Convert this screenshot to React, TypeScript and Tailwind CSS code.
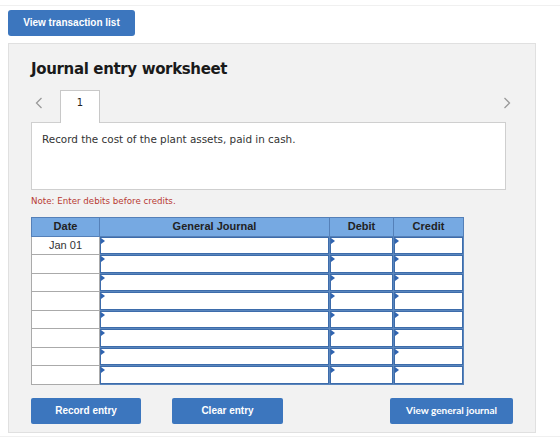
import React from "react";

const rows = ["Jan 01", "", "", "", "", "", "", ""];

function Tri() {
  return (
    <span className="absolute left-0 top-0 w-0 h-0 border-t-[3px] border-b-[3px] border-l-[4px] border-t-transparent border-b-transparent border-l-[#2f63b0]" />
  );
}

function InputCell() {
  return (
    <td className="p-0 h-[18.5px] border border-[#5a86bd]">
      <div className="relative h-full border border-[#3d6cab] bg-white">
        <Tri />
      </div>
    </td>
  );
}

function Chevron({ dir }: { dir: "left" | "right" }) {
  return (
    <svg width="8" height="12" viewBox="0 0 8 12" fill="none" stroke="#9a9a9a" strokeWidth="1.3">
      {dir === "left" ? <path d="M6.5 1 L1.5 6 L6.5 11" /> : <path d="M1.5 1 L6.5 6 L1.5 11" />}
    </svg>
  );
}

export default function App() {
  return (
    <div className="w-[560px] h-[442px] bg-white relative font-['DejaVu_Sans',sans-serif]">
      <div className="h-[6px] border-b border-[#f0f0f0]" />
      <div className="px-2 pt-[3px]">
        <button className="h-[26px] w-[127px] rounded-[3px] bg-[#3c76be] text-white text-[10px] font-bold font-['Liberation_Sans',sans-serif]">
          View transaction list
        </button>
      </div>
      <div className="mx-2 mt-[7px] w-[528px] h-[390px] bg-[#f2f2f2] border border-[#e0e0e0] px-[22px] pt-[15px]">
        <h1 className="text-[15px] font-bold text-[#1a1a1a] leading-[20px] tracking-[-0.35px]">
          Journal entry worksheet
        </h1>
        <div className="mt-[10px] flex items-end h-[33px] relative">
          <span className="w-[29px] pl-[4px] pb-[13px]">
            <Chevron dir="left" />
          </span>
          <div className="w-[40px] h-[33px] bg-white border border-[#c8c8c8] border-b-0 flex justify-center pt-[4px] text-[10px] text-[#222] relative z-10 -mb-px">
            1
          </div>
          <span className="ml-auto mr-[2px] pb-[13px]">
            <Chevron dir="right" />
          </span>
        </div>
        <div className="w-[475px] h-[68px] bg-white border border-[#cfcfcf] px-[10px] pt-[9px] text-[10.4px] text-[#333]">
          Record the cost of the plant assets, paid in cash.
        </div>
        <p className="mt-[5px] text-[8.7px] text-[#b83a32]">Note: Enter debits before credits.</p>
        <table className="mt-[9px] border-collapse w-[432px] font-['Liberation_Sans',sans-serif] table-fixed">
          <colgroup>
            <col className="w-[68px]" />
            <col className="w-[230px]" />
            <col className="w-[64px]" />
            <col className="w-[70px]" />
          </colgroup>
          <thead>
            <tr className="h-[19px] bg-[#76a9e2] text-[11px] font-bold text-[#222]">
              <th className="border border-[#5580b8] font-bold">Date</th>
              <th className="border border-[#5580b8] font-bold">General Journal</th>
              <th className="border border-[#5580b8] font-bold">Debit</th>
              <th className="border border-[#5580b8] font-bold">Credit</th>
            </tr>
          </thead>
          <tbody>
            {rows.map((d, i) => (
              <tr key={i} className="h-[18.5px]">
                <td className="p-0 border border-[#aaaaaa] bg-white text-center text-[11px] text-[#333]">{d}</td>
                <InputCell />
                <InputCell />
                <InputCell />
              </tr>
            ))}
          </tbody>
        </table>
        <div className="mt-[13px] flex w-[482px] text-white text-[10px] font-bold font-['Liberation_Sans',sans-serif]">
          <button className="w-[110px] h-[26px] rounded-[2px] bg-[#3c76be]">Record entry</button>
          <button className="ml-[31px] w-[111px] h-[26px] rounded-[2px] bg-[#3c76be]">Clear entry</button>
          <button className="ml-auto w-[123px] h-[26px] rounded-[2px] bg-[#3c76be] font-['Lato',sans-serif] text-[10px]">
            View general journal
          </button>
        </div>
      </div>
      <div className="absolute left-0 right-0 top-[436px] border-t border-[#f0f0f0]" />
    </div>
  );
}
